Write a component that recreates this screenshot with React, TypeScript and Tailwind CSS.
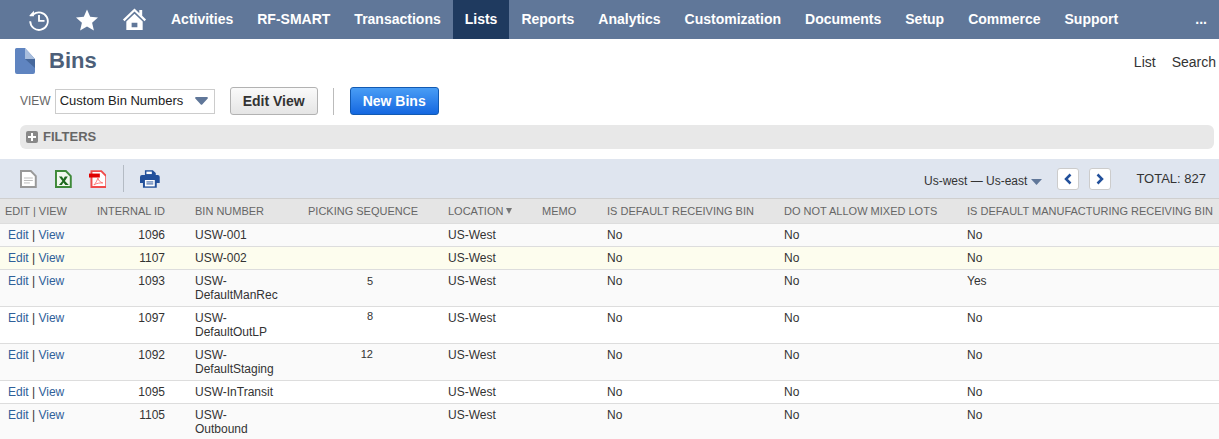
import React from "react";

const nav = ["Activities", "RF-SMART", "Transactions", "Lists", "Reports", "Analytics", "Customization", "Documents", "Setup", "Commerce", "Support"];

const rows = [
  { id: "1096", bin: "USW-001", seq: "", man: "No", bg: "bg-[#fafafa]", sp: "pt-[4px]" },
  { id: "1107", bin: "USW-002", seq: "", man: "No", bg: "bg-[#fdfdee]", sp: "pt-[4px]" },
  { id: "1093", bin: "USW-DefaultManRec", seq: "5", man: "Yes", bg: "bg-[#fafafa]", sp: "pt-[4px]" },
  { id: "1097", bin: "USW-DefaultOutLP", seq: "8", man: "No", bg: "bg-white", sp: "pt-[2px]" },
  { id: "1092", bin: "USW-DefaultStaging", seq: "12", man: "No", bg: "bg-[#fafafa]", sp: "pt-[3px]" },
  { id: "1095", bin: "USW-InTransit", seq: "", man: "No", bg: "bg-white", sp: "pt-[4px]" },
  { id: "1105", bin: "USW-Outbound", seq: "", man: "No", bg: "bg-[#fafafa]", sp: "pt-[4px]" },
];

const th = "h-[25px] px-[7px] text-left font-normal text-[11px] text-[#666666] whitespace-nowrap align-middle";
const td = "px-[7px] pt-[4px] pb-[4px] align-top leading-[14px] border-b border-[#dddddd]";

export default function App() {
  return (
    <div className="w-[1219px] h-[439px] overflow-hidden bg-white text-[12px] text-[#333333] font-['Liberation_Sans',Arial,sans-serif]">
      <header className="h-[39px] bg-[#607799] flex items-stretch text-white">
        <div className="w-[159px] flex items-center pl-[28px] shrink-0">
          <svg width="22" height="23" viewBox="0 0 24 24" fill="none" stroke="white" strokeWidth="2">
            <path d="M6 6.300A9.600 9.600 0 1 1 2.400 14" />
            <path d="M1.500 7.500 6.500 2.500V8.500H2Z" fill="white" stroke="none" />
            <path d="M12 7V13.500H18" />
          </svg>
          <svg width="24" height="24" viewBox="0 0 24 24" fill="white" className="ml-[25px]"><path d="M12 1.500l3.200 7.200 7.800.8-5.900 5.200 1.800 7.800L12 18.400l-6.900 4.100 1.800-7.800L1 9.500l7.800-.8z" /></svg>
          <svg width="25" height="25" viewBox="0 0 26 26" fill="white" className="ml-[23px]">
            <path d="M13 1.500 1 13l1.600 1.700L13 4.800l10.400 9.900L25 13l-4-3.800V3h-3v3.400z" />
            <path fillRule="evenodd" d="M13 7 4.500 15v9h17v-9zM10 16.500h6V21h-6z" />
          </svg>
        </div>
        <nav className="flex items-stretch text-[14px] font-bold">
          {nav.map((n) => (
            <a key={n} className={`flex items-center px-[12px] ${n === "Lists" ? "bg-[#1f3a5f]" : ""}`}>{n}</a>
          ))}
        </nav>
        <div className="ml-auto pr-[12px] flex items-center text-[14px] font-bold">...</div>
      </header>

      <div className="h-[46px] flex items-start pl-[15px] pr-[3px]">
        <svg width="20" height="26" viewBox="0 0 20 26" className="mt-[9px]">
          <path d="M1.500 0H10L20 11v13a2 2 0 0 1-2 2H2a2 2 0 0 1-2-2V1.500A1.500 1.500 0 0 1 1.500 0z" fill="#5f84c0" />
          <path d="M10 0 20 11H10z" fill="#a9bedd" />
          <path d="M10 11H20V20z" fill="#46689c" />
        </svg>
        <h1 className="ml-[14px] mt-[8px] text-[22px] leading-[28px] font-bold text-[#4d5f79]">Bins</h1>
        <div className="ml-auto mt-[15px] flex gap-[16px] text-[14px] leading-[16px]">
          <span>List</span>
          <span>Search</span>
        </div>
      </div>

      <div className="h-[32px] flex items-center pl-[20px]">
        <span className="text-[12px] text-[#666666]">VIEW</span>
        <div className="ml-[4px] w-[160px] h-[25px] border border-[#cccccc] flex items-center pl-[4px] pr-[6px] justify-between text-[13px] text-[#222222]">
          <span>Custom Bin Numbers</span>
          <svg width="13" height="8" viewBox="0 0 13 8"><path d="M1 0h11a1 1 0 0 1 .7 1.600L7.200 7.400a1 1 0 0 1-1.400 0L.3 1.600A1 1 0 0 1 1 0z" fill="#607799" /></svg>
        </div>
        <button className="ml-[15px] w-[88px] h-[28px] rounded-[3px] border border-[#b2b2b2] bg-gradient-to-b from-[#fafafa] to-[#e5e5e5] text-[14px] font-bold text-[#333333]">Edit View</button>
        <div className="ml-[15px] w-px h-[27px] bg-[#bbbbbb]" />
        <button className="ml-[16px] w-[89px] h-[28px] rounded-[3px] border border-[#125ab2] bg-gradient-to-b from-[#499df5] to-[#1467e0] text-[14px] font-bold text-white">New Bins</button>
      </div>

      <div className="mt-[8px] ml-[20px] mr-[5px] h-[24px] rounded-[6px] bg-[#e8e8e8] flex items-center pl-[6px] gap-[5px]">
        <span className="w-[12px] h-[12px] rounded-[2px] bg-[#888888] flex items-center justify-center">
          <svg width="8" height="8" viewBox="0 0 8 8"><path d="M3 0h2v3h3v2H5v3H3V5H0V3h3z" fill="white" /></svg>
        </span>
        <span className="text-[13px] font-bold text-[#666666]">FILTERS</span>
      </div>

      <div className="mt-[10px] h-[39px] bg-[#dfe5ef] flex items-center">
        <div className="pl-[20px] flex items-center w-[160px] shrink-0">
          <svg width="17" height="18" viewBox="0 0 17 18"><path d="M1 1h10l5 5v11H1z" fill="white" stroke="#999999" strokeWidth="2" /><path d="M4 8h9M4 10.500h9M4 13h6" stroke="#bbbbbb" /></svg>
          <svg width="17" height="18" viewBox="0 0 17 18" className="ml-[18px]"><path d="M1 1h10l5 5v11H1z" fill="#f2f8ef" stroke="#3f8a3a" strokeWidth="2" /><path d="M4 6.500 7.500 11l-3.500 4h3L8.500 12.500 10.500 15h3.500L10 11l3-4.500h-3L8.500 9 7 6.500z" fill="#1f6a1f" /></svg>
          <svg width="18" height="18" viewBox="0 0 18 18" className="ml-[17px]"><path d="M2.500 1h10l5 5v11h-15z" fill="white" stroke="#f04b4b" strokeWidth="2" /><path d="M0 3.500h11v4H0z" fill="#e00000" /><path d="M5 15c2-2 3-4 4-7 1 3 2 4 5 5-3 0-6 0-9 2z" fill="none" stroke="#f77" /></svg>
          <div className="ml-[17px] w-[1px] h-[27px] bg-[#b4bbc4]" />
          <svg width="20" height="18" viewBox="0 0 20 18" className="ml-[16px]"><path d="M5 0h8l3 3v3H5zM2 5h16a2 2 0 0 1 2 2v6h-3v5H3v-5H0V7a2 2 0 0 1 2-2z" fill="#22509b" /><path d="M5 10h10v6.500H5z" fill="white" /><path d="M6.500 12h7M6.500 14h7" stroke="#22509b" /><path d="M6.500 1.500H12V4H6.500z" fill="white" /></svg>
        </div>
        <div className="ml-auto flex items-center">
          <span className="text-[12px] mt-[5px]">Us-west — Us-east</span>
          <svg width="11" height="6" viewBox="0 0 11 6" className="ml-[4px] mt-[7px]"><path d="M0 0h11L5.500 6z" fill="#607799" /></svg>
          <span className="ml-[15px] w-[22px] h-[22px] rounded-[3px] border border-[#cccccc] bg-white flex items-center justify-center">
            <svg width="10" height="12" viewBox="0 0 10 12"><path d="M7.500 1.500 3 6l4.500 4.500" fill="none" stroke="#22509b" strokeWidth="2.500" /></svg>
          </span>
          <span className="ml-[10px] w-[22px] h-[22px] rounded-[3px] border border-[#cccccc] bg-white flex items-center justify-center">
            <svg width="10" height="12" viewBox="0 0 10 12"><path d="M2.500 1.500 7 6l-4.500 4.500" fill="none" stroke="#22509b" strokeWidth="2.500" /></svg>
          </span>
          <span className="ml-[25px] mr-[13px] text-[13px] text-[#333333]">TOTAL: 827</span>
        </div>
      </div>

      <table className="w-[1219px] table-fixed border-collapse">
        <colgroup>
          <col className="w-[90px]" />
          <col className="w-[98px]" />
          <col className="w-[113px]" />
          <col className="w-[140px]" />
          <col className="w-[94px]" />
          <col className="w-[65px]" />
          <col className="w-[177px]" />
          <col className="w-[183px]" />
          <col className="w-[259px]" />
        </colgroup>
        <thead>
          <tr className="bg-[#e5e5e5] border-t border-[#cfcfcf] border-b border-b-[#dddddd]">
            <th className="h-[25px] pl-[5px] text-left font-normal text-[11px] text-[#666666] whitespace-nowrap">EDIT | VIEW</th>
            <th className={`${th} !text-right !pr-[23px]`}>INTERNAL ID</th>
            <th className={th}>BIN NUMBER</th>
            <th className={th}>PICKING SEQUENCE</th>
            <th className={th}>
              <span className="inline-flex items-center gap-[3px]">
                LOCATION
                <svg width="6" height="6" viewBox="0 0 6 6"><path d="M0 0h6L3 6z" fill="#777777" /></svg>
              </span>
            </th>
            <th className={th}>MEMO</th>
            <th className={th}>IS DEFAULT RECEIVING BIN</th>
            <th className={th}>DO NOT ALLOW MIXED LOTS</th>
            <th className={th}>IS DEFAULT MANUFACTURING RECEIVING BIN</th>
          </tr>
        </thead>
        <tbody>
          {rows.map((r) => (
            <tr key={r.id} className={r.bg}>
              <td className={`${td} !pl-[8px] whitespace-nowrap`}>
                <span className="text-[#2f6099]">Edit</span> | <span className="text-[#2f6099]">View</span>
              </td>
              <td className={`${td} text-right !pr-[23px]`}>{r.id}</td>
              <td className={`${td} !pr-[26px]`}>{r.bin}</td>
              <td className={`px-[7px] pb-[4px] align-top leading-[14px] border-b border-[#dddddd] text-[11px] text-right !pr-[68px] ${r.sp}`}>{r.seq}</td>
              <td className={td}>US-West</td>
              <td className={td}></td>
              <td className={td}>No</td>
              <td className={td}>No</td>
              <td className={td}>{r.man}</td>
            </tr>
          ))}
        </tbody>
      </table>
    </div>
  );
}
